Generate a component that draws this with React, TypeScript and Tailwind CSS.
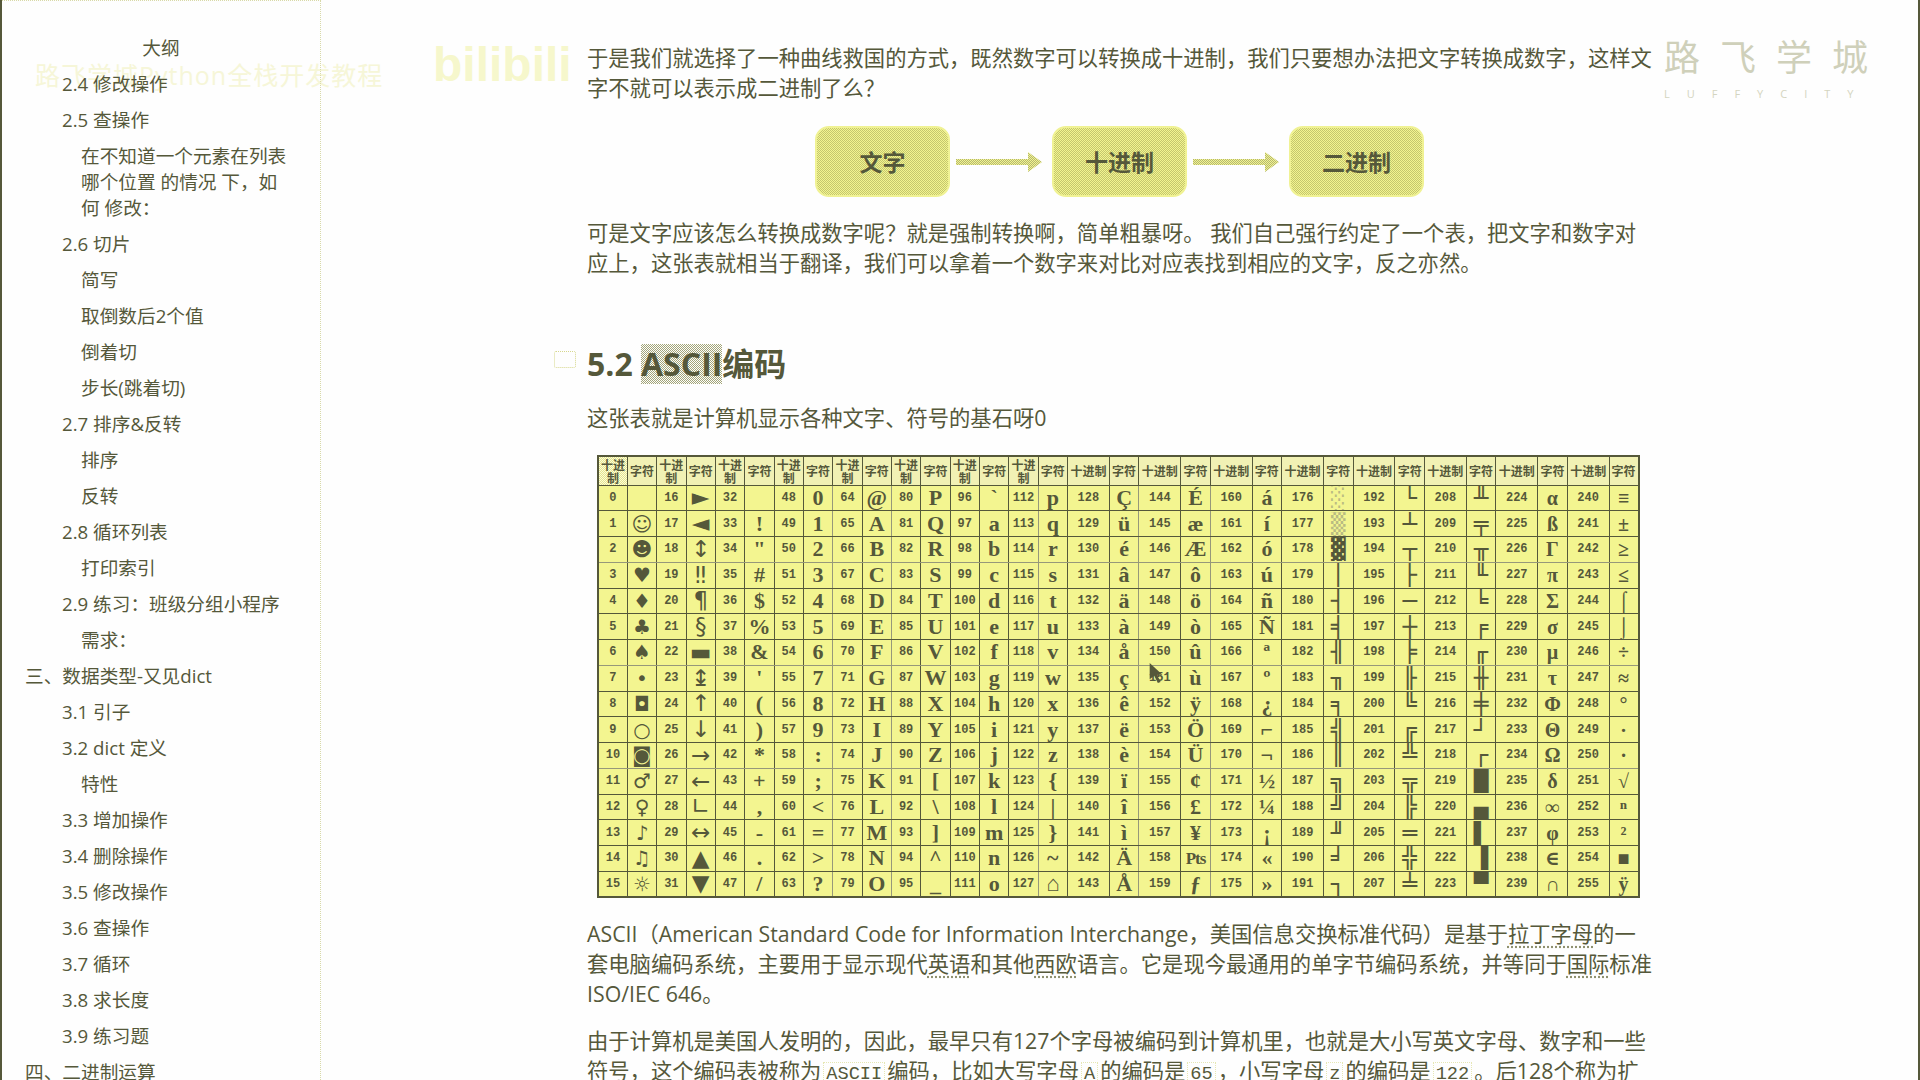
import React from 'react';

const sans = 'font-["Open_Sans","Noto_Sans_CJK_SC",sans-serif]';

const outline: [number, string][] = [
  [2, '2.4 修改操作'],
  [2, '2.5 查操作'],
  [3, '在不知道一个元素在列表\n哪个位置 的情况 下，如\n何 修改：'],
  [2, '2.6 切片'],
  [3, '简写'],
  [3, '取倒数后2个值'],
  [3, '倒着切'],
  [3, '步长(跳着切)'],
  [2, '2.7 排序&反转'],
  [3, '排序'],
  [3, '反转'],
  [2, '2.8 循环列表'],
  [3, '打印索引'],
  [2, '2.9 练习：班级分组小程序'],
  [3, '需求：'],
  [1, '三、数据类型-又见dict'],
  [2, '3.1 引子'],
  [2, '3.2 dict 定义'],
  [3, '特性'],
  [2, '3.3 增加操作'],
  [2, '3.4 删除操作'],
  [2, '3.5 修改操作'],
  [2, '3.6 查操作'],
  [2, '3.7 循环'],
  [2, '3.8 求长度'],
  [2, '3.9 练习题'],
  [1, '四、二进制运算'],
];

// one string per decimal/char column pair, 16 glyphs each
const columns = [
  ' ☺☻♥♦♣♠•◘○◙♂♀♪♫☼',
  '►◄↕‼¶§▬↨↑↓→←∟↔▲▼',
  ' !"#$%&\'()*+,-./',
  '0123456789:;<=>?',
  '@ABCDEFGHIJKLMNO',
  'PQRSTUVWXYZ[\\]^_',
  '`abcdefghijklmno',
  'pqrstuvwxyz{|}~⌂',
  'ÇüéâäàåçêëèïîìÄÅ',
  'ÉæÆôöòûùÿÖÜ¢£¥₧ƒ',
  'áíóúñÑªº¿⌐¬½¼¡«»',
  '░▒▓│┤╡╢╖╕╣║╗╝╜╛┐',
  '└┴┬├─┼╞╟╚╔╩╦╠═╬╧',
  '╨╤╥╙╘╒╓╫╪┘┌█▄▌▐▀',
  'αßΓπΣσµτΦΘΩδ∞φ∈∩',
  '≡±≥≤⌠⌡÷≈°∙·√ⁿ²■ÿ',
];

const grayRows = [2, 6, 10];
const grayCols = [7, 9, 14, 17, 19];

const glyphClass = (col: number) => {
  if (col === 0) return 'font-["DejaVu_Sans",sans-serif] text-[20px]';
  if (col === 1) return 'font-["DejaVu_Sans",sans-serif] text-[23px]';
  if (col >= 11 && col <= 13) return 'font-["DejaVu_Sans_Mono",monospace] text-[24px]';
  if (col === 14 || col === 15) return 'font-["Liberation_Serif","DejaVu_Serif",serif] font-bold text-[20px]';
  return 'font-["Liberation_Serif","DejaVu_Serif",serif] font-bold text-[22px]';
};

const headCell =
  "border border-[#55583a] p-0 bg-[image:repeating-conic-gradient(#e4e590_0%_25%,#fdfdd8_0%_50%)] bg-[length:2px_2px] font-['Noto_Sans_CJK_SC',sans-serif] text-[12px] leading-[13px] font-bold";

const AsciiTable = () => (
  <table className="ml-[10px] w-[1041px] h-[442px] table-fixed border-collapse border-2 border-[#55583a] bg-[#f3f590] text-[#55583a]">
    <colgroup>
      {columns.map((_, i) => (
        <React.Fragment key={i}>
          <col className={i < 8 ? 'w-[29.35px]' : 'w-[41.8px]'} />
          <col className={i < 8 ? 'w-[29.35px]' : 'w-[29.6px]'} />
        </React.Fragment>
      ))}
    </colgroup>
    <thead>
      <tr className="h-[29px]">
        {columns.map((_, i) => (
          <React.Fragment key={i}>
            <th className={headCell}>{i < 8 ? <>十进<br />制</> : '十进制'}</th>
            <th className={headCell}>字符</th>
          </React.Fragment>
        ))}
      </tr>
    </thead>
    <tbody>
      {Array.from({ length: 16 }, (_, row) => (
        <tr key={row} className="h-[25.75px]">
          {columns.map((col, c) => {
            const glyph = Array.from(col)[row];
            return (
              <React.Fragment key={c}>
                <td className={`border border-[#55583a] p-0 text-center font-['Liberation_Mono',monospace] font-bold text-[12px] leading-none ${grayRows.includes(row) ? 'border-b-[#96987a]' : ''} ${grayCols.includes(c * 2) ? 'border-r-[#96987a]' : ''}`}>
                  {c * 16 + row}
                </td>
                <td className={`border border-[#55583a] p-0 ${grayRows.includes(row) ? 'border-b-[#96987a]' : ''} ${grayCols.includes(c * 2 + 1) ? 'border-r-[#96987a]' : ''}`}>
                  <div className={`flex h-[24px] items-center justify-center overflow-hidden leading-none ${glyphClass(c)} ${glyph === '░' || glyph === '▒' ? 'text-[#b9bb82]' : ''}`}>
                    {glyph === '₧' ? <span className="text-[17px] tracking-[-1px]">Pts</span> : glyph}
                  </div>
                </td>
              </React.Fragment>
            );
          })}
        </tr>
      ))}
    </tbody>
  </table>
);

const Box = ({ label }: { label: string }) => (
  <div className="flex h-[71px] w-[135px] shrink-0 items-center justify-center rounded-[14px] border-2 border-[#f0f294] bg-[image:repeating-conic-gradient(#c4c66e_0%_25%,#f3f590_0%_50%)] bg-[length:2px_2px] text-[23px] font-bold text-[#55583a]">
    {label}
  </div>
);

const Arrow = ({ id }: { id: string }) => (
  <svg width="102" height="26" viewBox="0 0 102 26" className="shrink-0">
    <defs>
      <pattern id={id} width="2" height="2" patternUnits="userSpaceOnUse">
        <rect width="2" height="2" fill="#f3f590" />
        <rect width="1" height="1" fill="#b4b672" />
        <rect x="1" y="1" width="1" height="1" fill="#b4b672" />
      </pattern>
    </defs>
    <path d="M6 10h72V3l14 10-14 10v-7H6z" fill={`url(#${id})`} />
  </svg>
);

const Code = ({ children }: { children: React.ReactNode }) => (
  <code className="mx-[2px] border border-dotted border-[#e6e7b4] px-[2px] font-['Liberation_Mono',monospace] text-[18.67px]">{children}</code>
);

const Link = ({ children }: { children: React.ReactNode }) => (
  <span className="underline decoration-dotted decoration-[#8f9170] underline-offset-4">{children}</span>
);

export default function App() {
  return (
    <div className={`relative flex h-[1080px] w-[1920px] overflow-hidden border-x-2 border-[#55583a] bg-[#fefefe] text-[#55583a] ${sans}`}>
      {/* Video watermarks */}
      <div className="absolute left-[33px] top-[56px] text-[25px] leading-[38px] tracking-[1px] text-[#f6f6d8]">路飞学城Python全栈开发教程</div>
      <div className="absolute left-[431px] top-[30px] font-['Liberation_Sans',sans-serif] text-[48px] font-bold leading-[70px] text-[#f6f7cc]">bilibili</div>
      <div className="absolute left-[1662px] top-[34px] text-[36px] leading-[48px] tracking-[20px] text-[#cfd0ba]">路飞学城</div>
      <div className="absolute left-[1662px] top-[86px] text-[11px] leading-[16px] tracking-[17px] text-[#d4d5c0]">LUFFYCITY</div>

      {/* Outline */}
      <aside className="relative w-[319px] shrink-0 border-t border-r border-dotted border-[#d8d9a8] pt-[34px] text-[18.67px]">
        <div className="text-center leading-[26px]">大纲</div>
        <ul className="mt-[5px]">
          {outline.map(([level, label]) => (
            <li
              key={label}
              className={`whitespace-pre-line py-[5px] leading-[26px] ${level === 1 ? 'pl-[23px]' : level === 2 ? 'pl-[60px]' : 'pl-[79px]'}`}
            >
              {label}
            </li>
          ))}
        </ul>
      </aside>

      {/* Document */}
      <main className="relative flex-1 whitespace-nowrap pl-[266px] pt-[43px] text-[21.3px] leading-[30px]">
        <p>
          于是我们就选择了一种曲线救国的方式，既然数字可以转换成十进制，我们只要想办法把文字转换成数字，这样文<br />
          字不就可以表示成二进制了么？
        </p>

        <div className="ml-[228px] mt-[23px] flex items-center">
          <Box label="文字" />
          <Arrow id="dither-a" />
          <Box label="十进制" />
          <Arrow id="dither-b" />
          <Box label="二进制" />
        </div>

        <p className="mt-[21px]">
          可是文字应该怎么转换成数字呢？就是强制转换啊，简单粗暴呀。 我们自己强行约定了一个表，把文字和数字对<br />
          应上，这张表就相当于翻译，我们可以拿着一个数字来对比对应表找到相应的文字，反之亦然。
        </p>

        <h2 className="relative mt-[66px] text-[32px] font-bold leading-[40px]">
          <span className="absolute -left-[33px] top-[7px] h-[17px] w-[22px] rounded-[2px] border border-dotted border-[#d6d78c]" />
          5.2{' '}
          <span className="inline-block bg-[image:repeating-conic-gradient(#a3a578_0%_25%,#fefefe_0%_50%)] bg-[length:2px_2px]">ASCII</span>
          编码
        </h2>

        <p className="mt-[19px]">这张表就是计算机显示各种文字、符号的基石呀0</p>

        <div className="mt-[22px]">
          <AsciiTable />
        </div>

        <p className="mt-[21px]">
          ASCII（American Standard Code for Information Interchange，美国信息交换标准代码）是基于<Link>拉丁字母</Link>的一<br />
          套电脑编码系统，主要用于显示现代<Link>英语</Link>和其他<Link>西欧</Link>语言。它是现今最通用的单字节编码系统，并等同于<Link>国际</Link>标准<br />
          ISO/IEC 646。
        </p>

        <p className="mt-[17px]">
          由于计算机是美国人发明的，因此，最早只有127个字母被编码到计算机里，也就是大小写英文字母、数字和一些<br />
          符号，这个编码表被称为<Code>ASCII</Code>编码，比如大写字母<Code>A</Code>的编码是<Code>65</Code>，小写字母<Code>z</Code>的编码是<Code>122</Code>。后128个称为<Link>扩</Link>
        </p>

        {/* Mouse pointer */}
        <svg width="15" height="20" viewBox="0 0 15 22" className="absolute left-[828px] top-[663px]">
          <path d="M0 0l14 13H8l4 8-3 1-4-8-5 4z" fill="#55583a" />
        </svg>
      </main>
    </div>
  );
}
